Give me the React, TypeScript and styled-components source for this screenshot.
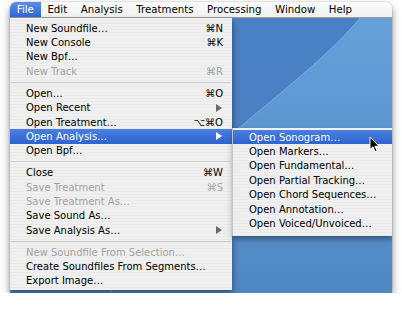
import styled, { createGlobalStyle } from 'styled-components';

const GlobalStyle = createGlobalStyle`
  html, body {
    margin: 0;
    padding: 0;
    background: #ffffff;
  }

  body {
    font-family: 'DejaVu Sans', 'Liberation Sans', sans-serif;
    -webkit-font-smoothing: antialiased;
  }
`;

type Item =
  | { sep: true }
  | {
      sep?: false;
      label: string;
      shortcut?: string;
      submenu?: boolean;
      disabled?: boolean;
      selected?: boolean;
    };

const titles = ['File', 'Edit', 'Analysis', 'Treatments', 'Processing', 'Window', 'Help'];

const fileItems: Item[] = [
  { label: 'New Soundfile…', shortcut: '⌘N' },
  { label: 'New Console', shortcut: '⌘K' },
  { label: 'New Bpf…' },
  { label: 'New Track', shortcut: '⌘R', disabled: true },
  { sep: true },
  { label: 'Open…', shortcut: '⌘O' },
  { label: 'Open Recent', submenu: true },
  { label: 'Open Treatment…', shortcut: '⌥⌘O' },
  { label: 'Open Analysis…', submenu: true, selected: true },
  { label: 'Open Bpf…' },
  { sep: true },
  { label: 'Close', shortcut: '⌘W' },
  { label: 'Save Treatment', shortcut: '⌘S', disabled: true },
  { label: 'Save Treatment As…', disabled: true },
  { label: 'Save Sound As…' },
  { label: 'Save Analysis As…', submenu: true },
  { sep: true },
  { label: 'New Soundfile From Selection…', disabled: true },
  { label: 'Create Soundfiles From Segments…' },
  { label: 'Export Image…' },
];

const analysisItems: Item[] = [
  { label: 'Open Sonogram…', selected: true },
  { label: 'Open Markers…' },
  { label: 'Open Fundamental…' },
  { label: 'Open Partial Tracking…' },
  { label: 'Open Chord Sequences…' },
  { label: 'Open Annotation…' },
  { label: 'Open Voiced/Unvoiced…' },
];

function MenuRows({ items }: { items: Item[] }) {
  return (
    <>
      {items.map((item, i) =>
        item.sep ? (
          <Separator key={i} />
        ) : (
          <Row key={i} $disabled={item.disabled} $selected={item.selected}>
            <span>{item.label}</span>
            {item.shortcut && <Shortcut>{item.shortcut}</Shortcut>}
            {item.submenu && <Arrow $selected={item.selected} />}
          </Row>
        )
      )}
    </>
  );
}

export default function App() {
  return (
    <>
      <GlobalStyle />
      <Screen>
        <MenuBar>
          {titles.map((t, i) => (
            <MenuTitle key={t} $active={i === 0}>
              {t}
            </MenuTitle>
          ))}
        </MenuBar>
        <Desktop>
          <Wallpaper viewBox="0 0 382 275" preserveAspectRatio="none">
            <defs>
              <linearGradient id="deep" x1="0" y1="0" x2="0" y2="1">
                <stop offset="0" stopColor="#4a80c5" />
                <stop offset="1" stopColor="#4c83c0" />
              </linearGradient>
              <linearGradient id="light" x1="0" y1="0" x2="0" y2="1">
                <stop offset="0" stopColor="#66a0d8" />
                <stop offset="0.6" stopColor="#5a93cf" />
                <stop offset="1" stopColor="#4f87c3" />
              </linearGradient>
            </defs>
            <rect width="382" height="275" fill="url(#deep)" />
            <path
              d="M100 275 C170 150 230 110 280 67 C310 42 335 18 350 0 L382 0 L382 275 Z"
              fill="url(#light)"
            />
            <path
              d="M100 275 C170 150 230 110 280 67 C310 42 335 18 350 0"
              fill="none"
              stroke="#8dbbe6"
              strokeOpacity="0.7"
              strokeWidth="0.8"
            />
          </Wallpaper>

          <FileMenu>
            <MenuRows items={fileItems} />
          </FileMenu>

          <SubMenu>
            <MenuRows items={analysisItems} />
          </SubMenu>

          <Cursor width="12" height="17" viewBox="0 0 12 17">
            <path
              d="M1 1 L1 13.5 L4 10.8 L6.2 15.6 L8.1 14.8 L6 10.2 L10 10.2 Z"
              fill="#000"
              stroke="#fff"
              strokeWidth="1"
              strokeLinejoin="round"
            />
          </Cursor>
        </Desktop>
      </Screen>
    </>
  );
}

const Screen = styled.div`
  display: flex;
  flex-direction: column;
  width: 382px;
  height: 291px;
  margin: 2px 0 0 10px;
  border-radius: 6px 6px 0 0;
  overflow: hidden;
  box-shadow: 0 5px 9px rgba(0, 0, 0, 0.45), 0 0 2px rgba(0, 0, 0, 0.25);
`;

const MenuBar = styled.div`
  display: flex;
  align-items: stretch;
  height: 15px;
  flex-shrink: 0;
  background: linear-gradient(#fbfbfb, #f1f1f1);
  border-bottom: 1px solid #9c9c9c;
`;

const MenuTitle = styled.div<{ $active?: boolean }>`
  display: flex;
  align-items: center;
  padding: 0 6.8px;
  font-size: 10.2px;
  color: ${(p) => (p.$active ? '#ffffff' : '#000000')};
  background: ${(p) =>
    p.$active ? 'linear-gradient(#5a8ee6, #2f66d4)' : 'transparent'};
`;

const Desktop = styled.div`
  position: relative;
  flex: 1;
`;

const Wallpaper = styled.svg`
  position: absolute;
  inset: 0;
  width: 100%;
  height: 100%;
  display: block;
`;

const MenuPanel = styled.div`
  position: absolute;
  display: flex;
  flex-direction: column;
  background: repeating-linear-gradient(
    to bottom,
    #f0f0f0 0,
    #f0f0f0 2px,
    #e9e9e9 2px,
    #e9e9e9 3px
  );
  box-shadow: 1px 3px 6px rgba(0, 0, 0, 0.4);
`;

const FileMenu = styled(MenuPanel)`
  top: 0;
  left: 0;
  width: 222px;
  padding: 3px 0 2px;
`;

const SubMenu = styled(MenuPanel)`
  top: 110px;
  left: 222px;
  width: 160px;
  padding: 2px 0 5px;
  border-left: 1px solid #c4c4c4;
  box-sizing: border-box;
`;

const Row = styled.div<{ $disabled?: boolean; $selected?: boolean }>`
  position: relative;
  display: flex;
  align-items: center;
  height: 14.4px;
  padding: 0 9px 0 16px;
  font-size: 10px;
  white-space: nowrap;
  color: ${(p) => (p.$selected ? '#ffffff' : p.$disabled ? '#a3a3a3' : '#000000')};
  background: ${(p) =>
    p.$selected ? 'linear-gradient(#4a80e0, #2d63d0)' : 'transparent'};
`;

const Shortcut = styled.span`
  margin-left: auto;
  font-size: 10px;
`;

const Arrow = styled.span<{ $selected?: boolean }>`
  margin-left: auto;
  margin-right: 1px;
  width: 0;
  height: 0;
  border-top: 4px solid transparent;
  border-bottom: 4px solid transparent;
  border-left: 6px solid ${(p) => (p.$selected ? '#ffffff' : '#6a6a6a')};
`;

const Separator = styled.div`
  height: 7.5px;
  display: flex;
  align-items: center;

  &::after {
    content: '';
    flex: 1;
    margin: 0 1px;
    height: 1px;
    background: #cfcfcf;
  }
`;

const Cursor = styled.svg`
  position: absolute;
  left: 359px;
  top: 118px;
`;
